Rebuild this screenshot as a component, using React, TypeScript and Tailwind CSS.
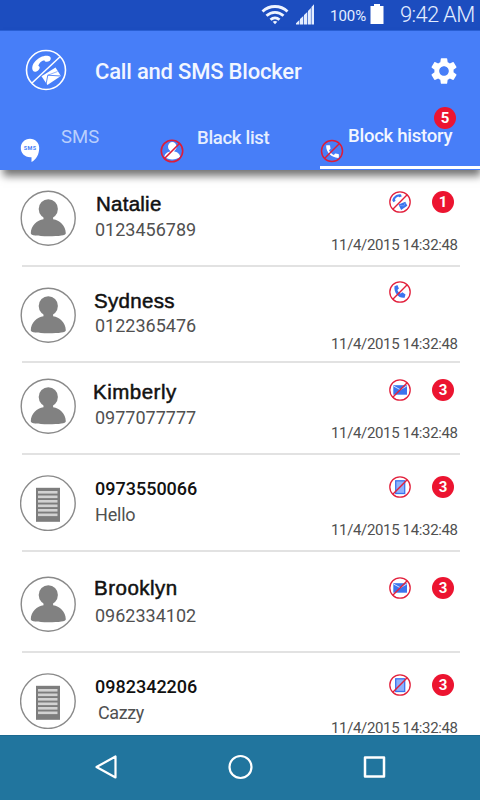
import React from "react";
import clsx from "clsx";
import { MdCall, MdSettings } from "react-icons/md";

type BlockKind = "all" | "call" | "mail" | "log";

interface HistoryEntry {
  title: string;
  detail: string;
  time?: string;
  kind: BlockKind;
  count?: number;
  saved: boolean;
  rowClass: string;
  avatarClass: string;
  titleClass: string;
  detailClass: string;
  iconClass: string;
  timeClass: string;
}

const TIME = "11/4/2015 14:32:48";

const entries: HistoryEntry[] = [
  {
    title: "Natalie",
    detail: "0123456789",
    time: TIME,
    kind: "all",
    count: 1,
    saved: true,
    rowClass: "h-[97px]",
    avatarClass: "mt-5",
    titleClass: "mt-[22px] ml-px tracking-[0.25px]",
    detailClass: "mt-1",
    iconClass: "mt-[21px]",
    timeClass: "mt-[23px]",
  },
  {
    title: "Sydness",
    detail: "0122365476",
    time: TIME,
    kind: "call",
    saved: true,
    rowClass: "h-24",
    avatarClass: "mt-5",
    titleClass: "mt-[22px] -ml-px tracking-[0.3px]",
    detailClass: "mt-[3px]",
    iconClass: "mt-3.5",
    timeClass: "mt-8",
  },
  {
    title: "Kimberly",
    detail: "0977077777",
    time: TIME,
    kind: "mail",
    count: 3,
    saved: true,
    rowClass: "h-[92px]",
    avatarClass: "mt-[15px]",
    titleClass: "mt-[17px] -ml-0.5 tracking-[0.5px]",
    detailClass: "mt-1",
    iconClass: "mt-4",
    timeClass: "mt-[23px]",
  },
  {
    title: "0973550066",
    detail: "Hello",
    time: TIME,
    kind: "log",
    count: 3,
    saved: false,
    rowClass: "h-[97px]",
    avatarClass: "mt-5",
    titleClass: "mt-[22px]",
    detailClass: "mt-1 tracking-[-0.2px]",
    iconClass: "mt-[21px]",
    timeClass: "mt-[23px]",
  },
  {
    title: "Brooklyn",
    detail: "0962334102",
    kind: "mail",
    count: 3,
    saved: true,
    rowClass: "h-[101px]",
    avatarClass: "mt-6",
    titleClass: "mt-6 -ml-px tracking-[0.5px]",
    detailClass: "mt-1.5",
    iconClass: "mt-[25px]",
    timeClass: "",
  },
  {
    title: "0982342206",
    detail: "Cazzy",
    time: TIME,
    kind: "log",
    count: 3,
    saved: false,
    rowClass: "h-[97px]",
    avatarClass: "mt-5",
    titleClass: "mt-[22px]",
    detailClass: "mt-1 ml-[3px] tracking-[-0.4px]",
    iconClass: "mt-[21px]",
    timeClass: "mt-[23px]",
  },
];

const PersonAvatar = () => (
  <svg viewBox="0 0 56 56" className="size-14">
    <circle cx="28.200" cy="28.200" r="27" fill="#fff" stroke="#8a8a8a" strokeWidth="1.400" />
    <g fill="#818181">
      <ellipse cx="28.300" cy="19" rx="9.600" ry="9.800" />
      <path d="M23.500 25h9.600v4.300c6.500 1 12.600 6.200 12.700 14 .1 2.200-6.500 3-17.500 3s-17.600-.8-17.500-3c.1-7.800 6.200-13 12.700-14z" />
    </g>
  </svg>
);

const LogAvatar = () => (
  <svg viewBox="0 0 56 56" className="size-14">
    <circle cx="27.900" cy="28.200" r="27.300" fill="#fff" stroke="#8a8a8a" strokeWidth="1.400" />
    <rect x="16" y="12.800" width="24" height="34" fill="#7d7d7d" />
    {[16, 20.500, 25, 29.500, 34, 38.500].map((y) => (
      <rect key={y} x="18" y={y} width="19.500" height="2.600" fill="#d2d2d2" />
    ))}
  </svg>
);

const BlockIcon = ({ kind }: { kind: BlockKind }) => (
  <svg viewBox="0 0 22 22" className="size-[22px]">
    <circle cx="11" cy="11" r="10.200" fill="#fff" />
    {kind === "all" && (
      <g fill="#3b74ee">
        <path d="M3.300 9.500C3.800 5.700 8.600 2.300 12 3.600l.7 1.900-2.500.8-.8-.8C7.700 6 6.400 7.200 6 8.600l.6 1.100-2 1.500z" />
        <path d="m9.500 13.500 6.800-2.800 2 4-6.200 4.200z" />
        <path d="m10.500 14.500 4.300.3 1.600-3" fill="none" stroke="#8fb1fb" strokeWidth=".6" />
      </g>
    )}
    {kind === "call" && (
      <path
        d="M5.500 5.200 8.400 4l1.500 3.500-1.500 1.400c.6 1.700 1.800 3 3.400 3.700l1.500-1.300 3.200 2.100-.9 3.300C10 17.800 4.500 11.500 5.500 5.200z"
        fill="#3b74ee"
      />
    )}
    {kind === "mail" && (
      <>
        <rect x="4.300" y="6.200" width="13.700" height="9.500" fill="#3b74ee" />
        <path d="m4.500 7 6.700 3.700L17.800 7" fill="none" stroke="#d5e2ff" strokeWidth="1" />
      </>
    )}
    {kind === "log" && (
      <rect x="6.700" y="4.800" width="9" height="12.700" fill="#8fb1fb" stroke="#3b74ee" strokeWidth="1.300" />
    )}
    <path d="M3.800 18.200 18.200 3.800" stroke="#e2203c" strokeWidth="1.400" />
    <circle cx="11" cy="11" r="10.200" fill="none" stroke="#e2203c" strokeWidth="1.300" />
  </svg>
);

const CountBadge = ({ count, className }: { count: number; className?: string }) => (
  <span
    className={clsx(
      "flex size-[22px] items-center justify-center rounded-full bg-[#ec1430] text-[15px] leading-none font-bold text-white",
      className
    )}
  >
    {count}
  </span>
);

const HistoryRow = ({ entry }: { entry: HistoryEntry }) => (
  <li className={clsx("flex shrink-0 border-b-2 border-[#e2e2e2]", entry.rowClass)}>
    <div className={clsx("-ml-0.5 w-[75px]", entry.avatarClass)}>
      {entry.saved ? <PersonAvatar /> : <LogAvatar />}
    </div>
    <div className="flex flex-1 flex-col items-start">
      <p
        className={clsx(
          "h-6 leading-6 text-[#111]",
          entry.saved
            ? "font-['Liberation_Sans',sans-serif] text-[20.500px] [-webkit-text-stroke:0.5px_#111]"
            : "text-[18px] font-medium",
          entry.titleClass
        )}
      >
        {entry.title}
      </p>
      <p className={clsx("h-5 text-[18px] leading-5 text-[#505050]", entry.detailClass)}>{entry.detail}</p>
    </div>
    <div className="w-[129px]">
      <div className={clsx("flex h-[22px] gap-[21px] pl-[58px]", entry.iconClass)}>
        <BlockIcon kind={entry.kind} />
        {entry.count && <CountBadge count={entry.count} />}
      </div>
      {entry.time && (
        <p
          className={clsx(
            "h-[18px] text-[15px] leading-[18px] tracking-[-0.35px] whitespace-nowrap text-[#505050]",
            entry.timeClass
          )}
        >
          {entry.time}
        </p>
      )}
    </div>
  </li>
);

const StatusBar = () => (
  <div className="flex h-[31px] items-start border-b border-[#2a60d6] bg-[#1c4dbf] pl-[261px] text-[#e4edff]">
    <svg viewBox="0 0 28 22" className="mt-1 h-[22px] w-7 shrink-0" fill="none" stroke="#eef4ff" strokeWidth="2.800">
      <path d="M1.500 7.500C8.500.8 19.500.8 26.500 7.500M5.500 11.800c5-4.700 12-4.700 17 0M9.500 15.800c2.700-2.400 6.300-2.400 9 0" />
      <path d="m14 20.300-2.300-2.500q2.300-1.700 4.600 0z" fill="#eef4ff" stroke="none" />
    </svg>
    <svg viewBox="0 0 20 22" className="mt-1 ml-1.5 h-[22px] w-5 shrink-0" fill="#e4edff">
      <path d="M1 20.500v-1.300L4.400 16v4.500zM5 20.500V15l3.300-3v8.500zM9 20.500V11l3.300-3v12.500zM13 20.500V7l2.900-3v16.500zM16.500 20.500V3L19 .2v20.300z" />
    </svg>
    <span className="mt-[7px] ml-[15px] w-[38px] text-[15px] leading-[18px] whitespace-nowrap">100%</span>
    <svg viewBox="0 0 14 20" className="mt-1 ml-0.5 h-5 w-3.5 shrink-0" fill="#fff">
      <path d="M4 0h6v2h3.500v18H.5V2H4z" />
    </svg>
    <span className="mt-[3px] ml-4 text-[22px] leading-6 font-light tracking-[-0.7px] whitespace-nowrap">9:42 AM</span>
  </div>
);

const AppLogo = () => (
  <svg viewBox="0 0 42 42" className="size-[42px]" fill="#fff">
    <circle cx="21" cy="21" r="19.500" fill="none" stroke="#fff" strokeWidth="1.600" />
    <path d="M7 34 34.800 8" stroke="#fff" strokeWidth="1.500" />
    <path d="M8 21.800c-3.500-6.500 7-16.500 15.500-14.800 2.500.5 3 3.200 1.300 4.700-2.200 1.600-4.800 1.600-5.500-.4-3.200.9-5.200 2.800-6 5.500 1.900.5 1.800 2.800.3 4.300-1.600 1.800-4.500 2.500-5.600.7z" />
    <path d="m16.500 27.300 14-8.800 5.400 8.600-13.500 8.900z" />
    <path d="m21 35.500 1.800-9.300 12.800.8" fill="none" stroke="#477ef8" strokeWidth=".9" />
    <path d="m22.800 26.200 9.700-3.700" fill="none" stroke="#477ef8" strokeWidth=".6" />
  </svg>
);

const SmsIcon = () => (
  <svg viewBox="0 0 20 25" className="h-[25px] w-5">
    <path d="M10 .8c5.300 0 9.200 4 9.200 9 0 6.500-2.700 11.700-7.700 14.200v-4.800C5 19.800.8 15.300.8 9.800c0-5 3.900-9 9.200-9z" fill="#fff" />
    <text x="10" y="12.300" textAnchor="middle" fontSize="5.500" fontWeight="700" fill="#477ef8" textLength="12.500">
      SMS
    </text>
  </svg>
);

const BlockedPersonIcon = () => (
  <svg viewBox="0 0 24 24" className="size-6">
    <ellipse cx="12.300" cy="7.800" rx="4.300" ry="4.700" fill="#fff" />
    <path d="M4.500 18c0-3.400 3-5 5.800-5.500v-2h4v2c2.800.5 5.800 2.100 5.700 5.500-4 3.300-11.500 3.300-15.500 0z" fill="#fff" />
    <circle cx="12" cy="12" r="10.700" fill="none" stroke="#dd1c38" strokeWidth="1.600" />
    <path d="M4.500 19.500 19.500 4.500" stroke="#dd1c38" strokeWidth="1.600" />
  </svg>
);

const BlockedCallIcon = () => (
  <span className="grid size-6 place-items-center">
    <MdCall className="col-start-1 row-start-1 size-[17px] text-white" />
    <svg viewBox="0 0 24 24" className="col-start-1 row-start-1 size-6" fill="none" stroke="#dd1c38" strokeWidth="1.500">
      <circle cx="12" cy="12" r="10.500" />
      <path d="M4.500 19.500 19.500 4.500" />
    </svg>
  </span>
);

const Header = () => (
  <header className="z-10 h-[139px] bg-[#477ef8] shadow-[2px_7px_8px_-1px_rgba(0,0,0,0.55)]">
    <div className="flex h-[78px] items-center pr-5 pl-[25px]">
      <AppLogo />
      <h1 className="ml-7 flex-1 pt-[3px] text-[22px] leading-7 font-medium tracking-[-0.2px] text-[#f2f6ff]">
        Call and SMS Blocker
      </h1>
      <MdSettings className="mt-0.5 size-8 text-white" />
    </div>
    <nav className="grid h-[60px] grid-cols-3 text-[18.500px] leading-6 font-medium">
      <div className="flex pl-5">
        <span className="mt-[29px]">
          <SmsIcon />
        </span>
        <span className="mt-4 ml-[21px] font-normal text-[#b9cffd]">SMS</span>
      </div>
      <div className="flex">
        <span className="mt-[30px]">
          <BlockedPersonIcon />
        </span>
        <span className="mt-[17px] ml-[13px] tracking-[-0.3px] text-[#e6eeff]">Black list</span>
      </div>
      <div className="relative flex border-b-3 border-white">
        <span className="mt-[30px]">
          <BlockedCallIcon />
        </span>
        <span className="mt-[15px] ml-1 tracking-[-0.25px] whitespace-nowrap text-[#f2f6ff]">Block history</span>
        <CountBadge count={5} className="absolute -top-0.5 right-6" />
      </div>
    </nav>
  </header>
);

const NavigationBar = () => (
  <footer className="z-10 h-[65px] shrink-0 border-t border-[#1b6990] bg-[#21759e]">
    <div className="flex h-[62px] items-center justify-between px-[93px]">
      <svg viewBox="0 0 26 26" className="size-[26px]" fill="none" stroke="#fff" strokeWidth="2.200" strokeLinejoin="round">
        <path d="M3.500 13 22.500 2.500v21z" />
      </svg>
      <svg viewBox="0 0 26 26" className="size-[26px]" fill="none" stroke="#fff" strokeWidth="2.200">
        <circle cx="13.500" cy="13" r="11" />
      </svg>
      <svg viewBox="0 0 26 26" className="size-[26px]" fill="none" stroke="#fff" strokeWidth="2.500" strokeLinejoin="round">
        <rect x="4" y="3.500" width="19" height="19" />
      </svg>
    </div>
  </footer>
);

export default function App() {
  return (
    <div className="flex h-[800px] w-[480px] flex-col overflow-hidden bg-white font-[Roboto,sans-serif]">
      <StatusBar />
      <Header />
      <ul className="flex flex-1 flex-col overflow-hidden pr-5 pl-[22px]">
        {entries.map((entry) => (
          <HistoryRow key={entry.title} entry={entry} />
        ))}
      </ul>
      <NavigationBar />
    </div>
  );
}
